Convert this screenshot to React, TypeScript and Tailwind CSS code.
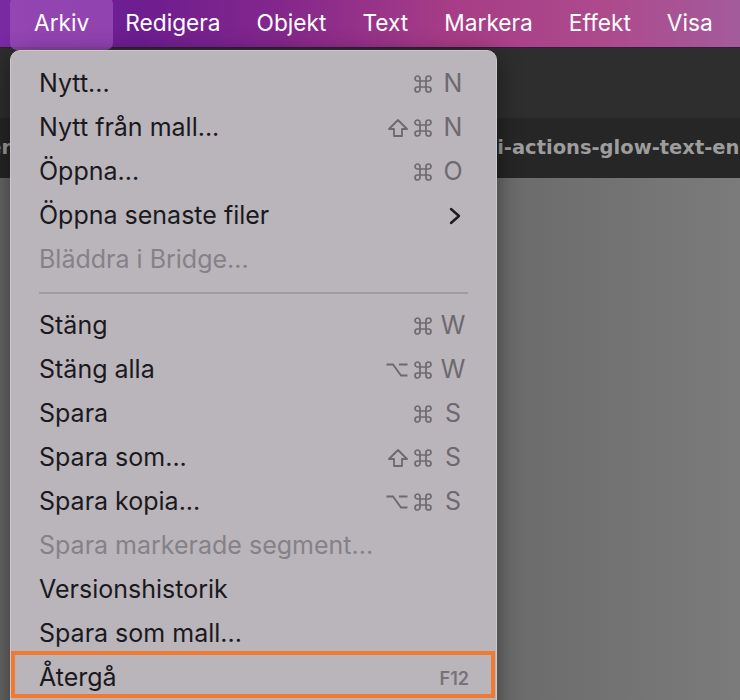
import { ReactNode } from "react";

type Item =
  | { kind: "item"; label: string; mods?: string[]; keyName?: string; disabled?: boolean; submenu?: boolean; small?: string; boxed?: boolean }
  | { kind: "sep" };

const MENUS = ["Arkiv", "Redigera", "Objekt", "Text", "Markera", "Effekt", "Visa"];

const ITEMS: Item[] = [
  { kind: "item", label: "Nytt...", mods: ["cmd"], keyName: "N" },
  { kind: "item", label: "Nytt från mall...", mods: ["shift", "cmd"], keyName: "N" },
  { kind: "item", label: "Öppna...", mods: ["cmd"], keyName: "O" },
  { kind: "item", label: "Öppna senaste filer", submenu: true },
  { kind: "item", label: "Bläddra i Bridge...", disabled: true },
  { kind: "sep" },
  { kind: "item", label: "Stäng", mods: ["cmd"], keyName: "W" },
  { kind: "item", label: "Stäng alla", mods: ["opt", "cmd"], keyName: "W" },
  { kind: "item", label: "Spara", mods: ["cmd"], keyName: "S" },
  { kind: "item", label: "Spara som...", mods: ["shift", "cmd"], keyName: "S" },
  { kind: "item", label: "Spara kopia...", mods: ["opt", "cmd"], keyName: "S" },
  { kind: "item", label: "Spara markerade segment...", disabled: true },
  { kind: "item", label: "Versionshistorik" },
  { kind: "item", label: "Spara som mall..." },
  { kind: "item", label: "Återgå", small: "F12", boxed: true },
];

const GLYPH = "#6d696f";

function Mod({ name }: { name: string }) {
  if (name === "cmd") {
    return (
      <svg width="20" height="20" viewBox="0 0 20 20">
        <path
          d="M7 15.5 V4.5 A2.5 2.5 0 1 0 4.5 7 H15.5 A2.5 2.5 0 1 0 13 4.5 V15.5 A2.5 2.5 0 1 0 15.5 13 H4.5 A2.5 2.5 0 1 0 7 15.5 Z"
          fill="none"
          stroke={GLYPH}
          strokeWidth="1.7"
          strokeLinejoin="round"
        />
      </svg>
    );
  }
  if (name === "shift") {
    return (
      <svg width="22" height="20" viewBox="0 0 22 20">
        <path d="M11 2 L20 11 H15 V18 H7 V11 H2 Z" fill="none" stroke={GLYPH} strokeWidth="1.8" strokeLinejoin="round" />
      </svg>
    );
  }
  return (
    <svg width="24" height="16" viewBox="0 0 24 16">
      <path d="M1.5 2.5 H8 L16 13.5 H22.5 M14 2.5 H22.5" fill="none" stroke={GLYPH} strokeWidth="1.8" />
    </svg>
  );
}

function Shortcut({ mods, keyName }: { mods?: string[]; keyName?: string }) {
  if (!keyName) return null;
  return (
    <div className="flex items-center text-[#6d696f]">
      <div className="flex items-center gap-[4px]">
        {mods?.map((m) => (
          <Mod key={m} name={m} />
        ))}
      </div>
      <span className="w-[26px] ml-[7px] text-center">{keyName}</span>
    </div>
  );
}

function Row({ item }: { item: Extract<Item, { kind: "item" }> }) {
  let right: ReactNode = <Shortcut mods={item.mods} keyName={item.keyName} />;
  if (item.submenu) {
    right = (
      <svg width="14" height="18" viewBox="0 0 14 18" className="mr-[4px]">
        <path d="M3 2 L11 9 L3 16" fill="none" stroke="#1d1b1f" strokeWidth="2.4" strokeLinecap="round" strokeLinejoin="round" />
      </svg>
    );
  }
  if (item.small) {
    right = <span className="text-[18px] font-semibold text-[#77737a] mr-[-3px]">{item.small}</span>;
  }
  return (
    <div
      className={
        "relative h-[44px] flex items-center justify-between pl-[28px] pr-[30px] " +
        (item.disabled ? "text-[#858188]" : "text-[#1b191d]")
      }
    >
      <span>{item.label}</span>
      {right}
      {item.boxed && (
        <div className="absolute left-0 right-[1px] top-[-5px] h-[47px] border-[4.5px] border-[#f07a32]" />
      )}
    </div>
  );
}

export default function App() {
  return (
    <div className="relative w-[740px] h-[700px] overflow-hidden bg-[#727272] font-['Inter','DejaVu_Sans',sans-serif]">
      <div className="h-[48px] flex items-center pl-[34px] gap-[36px] text-[22.7px] text-white bg-[linear-gradient(90deg,#7a2aa3_0%,#6c1d90_18%,#84278c_38%,#a63c86_60%,#ad4a8c_82%,#a35b9c_100%)] border-b border-[#3a1840]">
        {MENUS.map((m, i) => (
          <span key={m} className="relative">
            {i === 0 && <span className="absolute -left-[24px] -right-[24px] top-[-9px] bottom-[-9px] rounded-[7px] bg-[#9a4cb6]/80" />}
            <span className="relative">{m}</span>
          </span>
        ))}
      </div>
      <div className="h-[70px] bg-[#2e2e2e]" />
      <div className="h-[60px] bg-[#262626] flex items-center whitespace-nowrap overflow-hidden font-['DejaVu_Sans',sans-serif] font-bold text-[19.5px] text-[#9d9d9d]">
        <span className="ml-[-60px]">poster</span>
        <span className="ml-[486px]">i-actions-glow-text-en-1.ai</span>
      </div>
      <div className="h-[522px] bg-[linear-gradient(90deg,#656565_0%,#6c6c6c_70%,#7b7b7b_100%)]" />

      <div className="absolute left-[10px] top-[50px] w-[487px] h-[700px] rounded-[10px] bg-[#bab5bb] border border-[#cdc8ce] shadow-[0_6px_24px_rgba(0,0,0,0.45)] pt-[11px] text-[25px]">
        {ITEMS.map((item, i) =>
          item.kind === "sep" ? (
            <div key={i} className="h-[22px] flex items-center px-[28px]">
              <div className="h-[2px] w-full mr-[-2px] bg-[#a19ca3]" />
            </div>
          ) : (
            <Row key={i} item={item} />
          )
        )}
      </div>
    </div>
  );
}
